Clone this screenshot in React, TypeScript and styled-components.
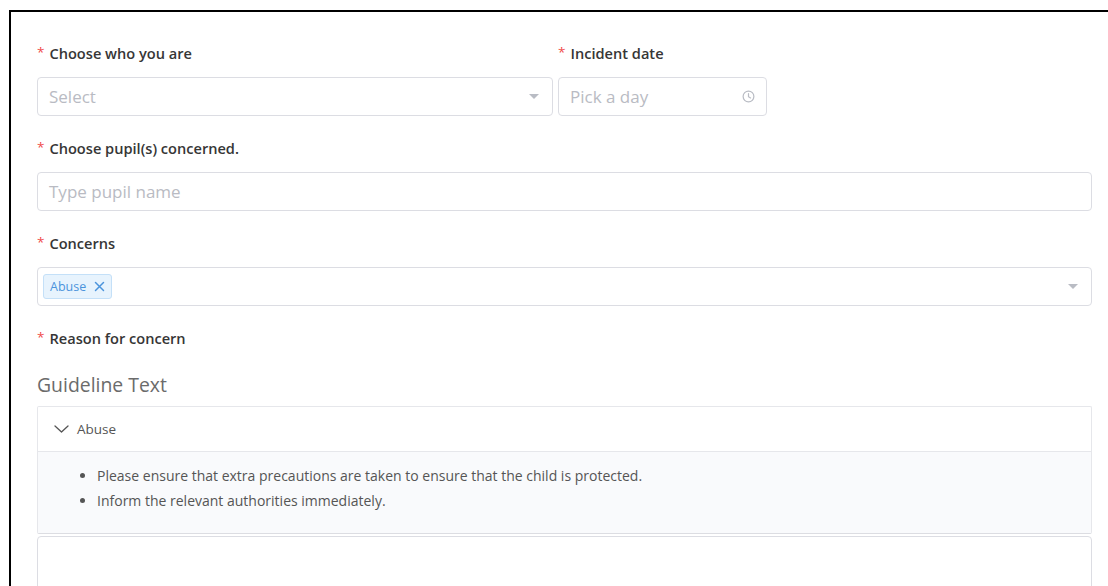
import React from "react";
import styled, { createGlobalStyle } from "styled-components";

const GlobalStyle = createGlobalStyle`
  html, body {
    margin: 0;
    padding: 0;
    background: #ffffff;
    overflow: hidden;
  }
  body {
    font-family: "Open Sans", "Liberation Sans", sans-serif;
    color: #333;
  }
  * { box-sizing: border-box; }
`;

const Frame = styled.div`
  margin: 10px 0 0 9px;
  border-top: 2px solid #000;
  border-left: 2px solid #000;
  height: 576px;
  overflow: hidden;
  padding: 29px 16px 0 26px;
`;

const Form = styled.form`
  display: flex;
  flex-direction: column;
`;

const Row = styled.div`
  display: grid;
  grid-template-columns: 516px 209px;
  column-gap: 5px;
`;

const Item = styled.div<{ $gap?: number }>`
  display: flex;
  flex-direction: column;
  margin-bottom: ${(p) => (p.$gap ?? 20)}px;
`;

const Label = styled.label`
  display: flex;
  align-items: center;
  height: 24px;
  margin-bottom: 12px;
  font-size: 14.6px;
  font-weight: 600;
  color: #363636;
  white-space: nowrap;
`;

const Star = styled.span`
  color: #f04a4a;
  font-size: 13.5px;
  font-weight: 400;
  margin-right: 5px;
  align-self: flex-start;
  line-height: 22px;
`;

const Field = styled.div`
  display: flex;
  align-items: center;
  height: 39px;
  border: 1px solid #dcdde3;
  border-radius: 4px;
  background: #fff;
  padding: 0 11px;
  gap: 8px;
`;

const Placeholder = styled.span`
  flex: 1;
  font-size: 17px;
  color: #b9bbc3;
  white-space: nowrap;
`;

const Caret = styled.span`
  width: 0;
  height: 0;
  border-left: 5px solid transparent;
  border-right: 5px solid transparent;
  border-top: 5px solid #b9bcc4;
  margin-right: 2px;
`;

const TagField = styled(Field)`
  padding: 0 11px 0 5px;
`;

const Tags = styled.div`
  flex: 1;
  display: flex;
`;

const Tag = styled.span`
  display: inline-flex;
  align-items: center;
  gap: 8px;
  height: 25px;
  padding: 0 6px 0 6px;
  border: 1px solid #c4e0f8;
  border-radius: 3px;
  background: #e7f3fd;
  color: #4b94dc;
  font-size: 12.5px;
`;

const Heading = styled.h3`
  margin: 9px 0 7px;
  height: 28px;
  line-height: 28px;
  font-size: 19.4px;
  font-weight: 400;
  color: #6b6b6b;
`;

const Panel = styled.div`
  border: 1px solid #e6e7eb;
  border-bottom-color: #dcdde2;
  border-radius: 2px;
`;

const PanelHeader = styled.div`
  display: flex;
  align-items: center;
  gap: 8px;
  height: 45px;
  padding: 0 0 0 16px;
  border-bottom: 1px solid #e6e7eb;
  font-size: 13.5px;
  color: #555;
`;

const PanelBody = styled.div`
  background: #f9fafc;
  padding: 11px 0 20px;
`;

const Bullets = styled.ul`
  margin: 0;
  padding-left: 59px;
  font-size: 14px;
  line-height: 25px;
  color: #555;
`;

const TextArea = styled.div`
  margin-top: 2px;
  height: 80px;
  flex-shrink: 0;
  border: 1px solid #dcdde3;
  border-radius: 4px;
  background: #fff;
`;

const ClockIcon = () => (
  <svg width="13" height="13" viewBox="0 0 14 14" fill="none" stroke="#b9bcc4" strokeWidth="1.3">
    <circle cx="7" cy="7" r="5.8" />
    <path d="M7 3.8V7.2L9.2 8.6" strokeLinecap="round" />
  </svg>
);

const CloseIcon = () => (
  <svg width="11" height="11" viewBox="0 0 11 11" stroke="#4b94dc" strokeWidth="1.5" strokeLinecap="round">
    <path d="M1.5 1.5L9.5 9.5M9.5 1.5L1.5 9.5" />
  </svg>
);

const ChevronDown = () => (
  <svg width="15" height="8" viewBox="0 0 15 8" fill="none" stroke="#555" strokeWidth="1.3" strokeLinecap="round" strokeLinejoin="round">
    <path d="M1 1L7.5 7L14 1" />
  </svg>
);

const Required = ({ children }: { children: React.ReactNode }) => (
  <Label>
    <Star>*</Star>
    {children}
  </Label>
);

export default function App() {
  return (
    <>
      <GlobalStyle />
      <Frame>
        <Form>
          <Row>
            <Item>
              <Required>Choose who you are</Required>
              <Field>
                <Placeholder>Select</Placeholder>
                <Caret />
              </Field>
            </Item>
            <Item>
              <Required>Incident date</Required>
              <Field>
                <Placeholder>Pick a day</Placeholder>
                <ClockIcon />
              </Field>
            </Item>
          </Row>

          <Item>
            <Required>Choose pupil(s) concerned.</Required>
            <Field>
              <Placeholder>Type pupil name</Placeholder>
            </Field>
          </Item>

          <Item>
            <Required>Concerns</Required>
            <TagField>
              <Tags>
                <Tag>
                  Abuse
                  <CloseIcon />
                </Tag>
              </Tags>
              <Caret />
            </TagField>
          </Item>

          <Item $gap={0}>
            <Required>Reason for concern</Required>
          </Item>
          <Heading>Guideline Text</Heading>
          <Panel>
            <PanelHeader>
              <ChevronDown />
              Abuse
            </PanelHeader>
            <PanelBody>
              <Bullets>
                <li>Please ensure that extra precautions are taken to ensure that the child is protected.</li>
                <li>Inform the relevant authorities immediately.</li>
              </Bullets>
            </PanelBody>
          </Panel>
          <TextArea />
        </Form>
      </Frame>
    </>
  );
}
